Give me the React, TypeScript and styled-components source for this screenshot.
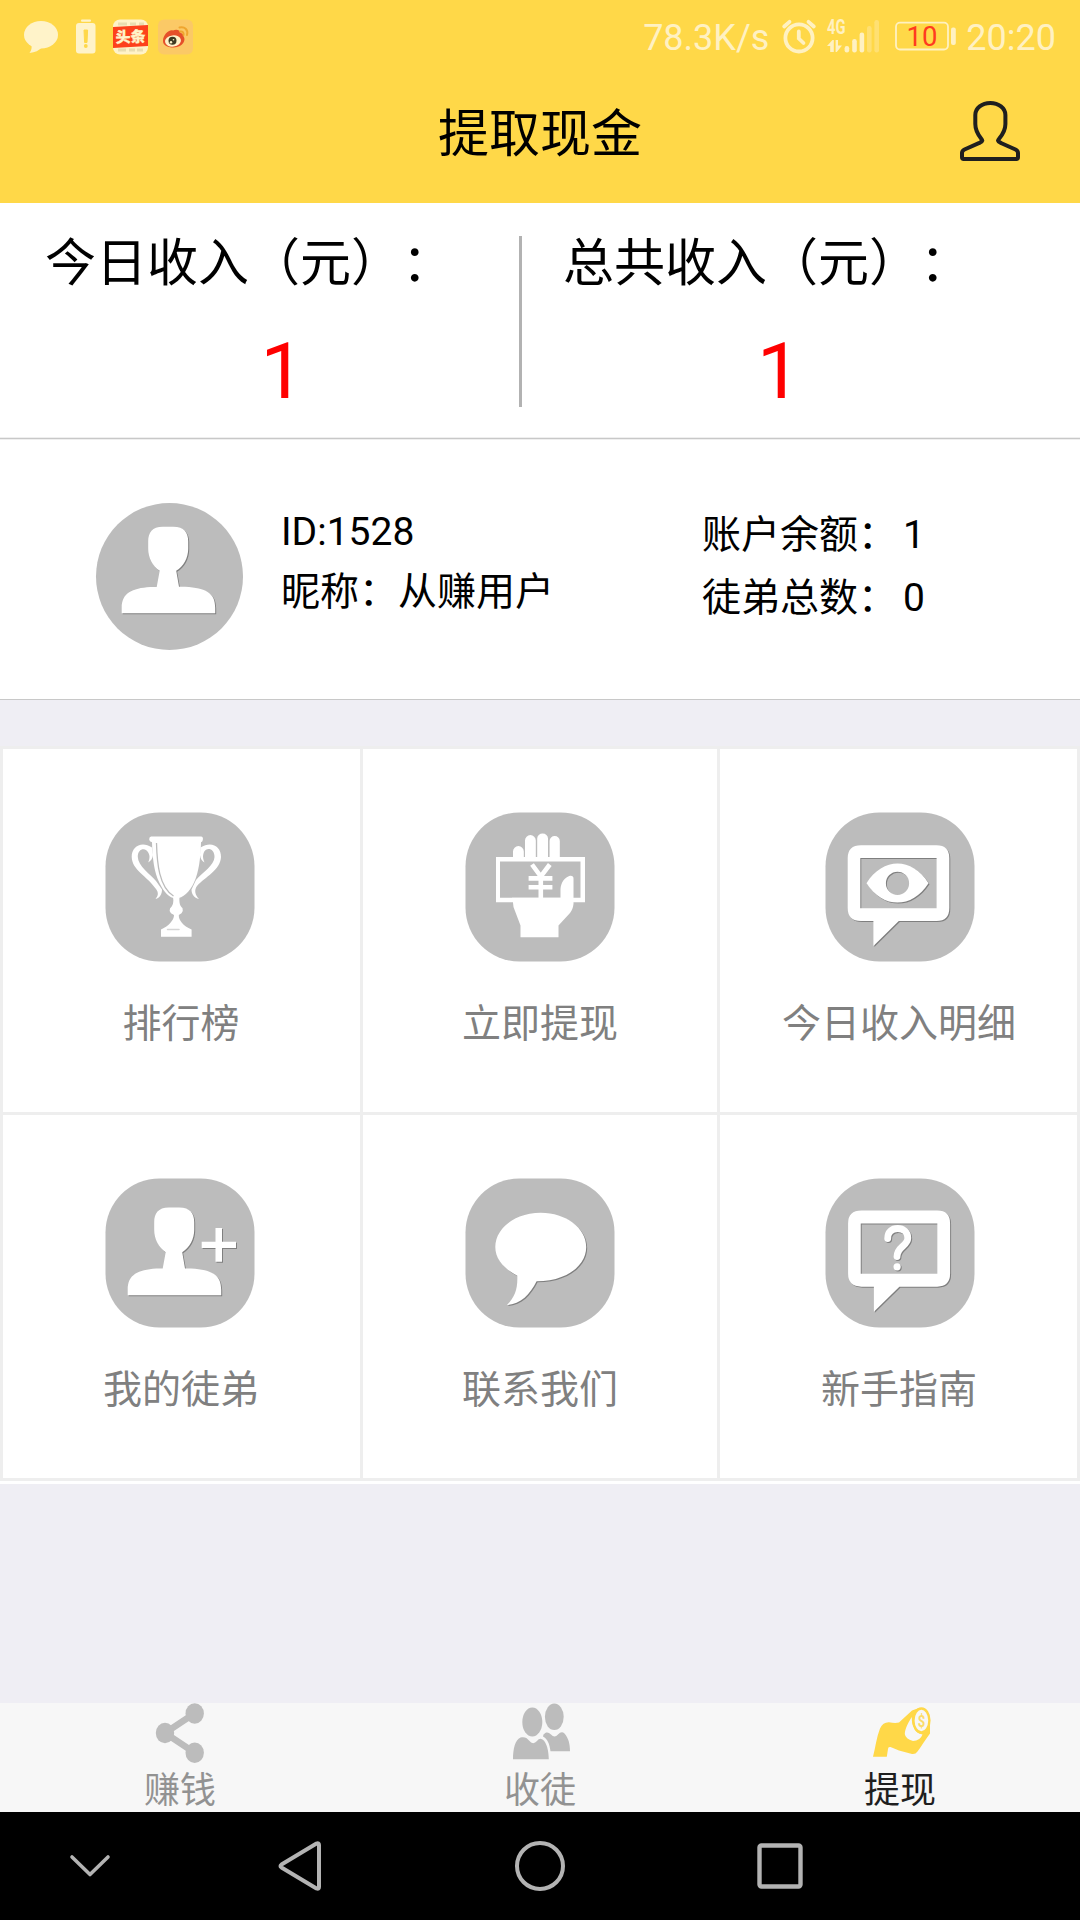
import React from "react";
import styled, { createGlobalStyle } from "styled-components";

const GlobalStyle = createGlobalStyle`
  * { box-sizing: border-box; }
  body {
    margin: 0;
    background: #efeef4;
    font-family: Roboto, "Noto Sans CJK SC", sans-serif;
    text-spacing-trim: space-all;
  }
  svg { display: block; flex: none; overflow: visible; }
`;

const Screen = styled.div`
  width: 1080px;
  height: 1920px;
  display: flex;
  flex-direction: column;
  overflow: hidden;
  background: #efeef4;
  color: #000;
`;

/* Status bar and title */
const Top = styled.header`
  height: 203px;
  background: #ffd848;
`;

const StatusBar = styled.div`
  height: 74px;
  padding: 0 24px;
  display: flex;
  justify-content: space-between;
  color: #fff1c2;
  font-size: 36px;
  line-height: 72px;
`;

const StatusGroup = styled.div`
  display: flex;
  align-items: center;
  height: 74px;
`;

const StatusText = styled.span`
  padding-top: 2px;
`;

const TitleBar = styled.div`
  height: 129px;
  display: grid;
  grid-template-columns: 1fr auto 1fr;
`;

const Title = styled.h1`
  grid-column: 2;
  margin: 0;
  font-size: 51px;
  font-weight: 400;
  line-height: 122px;
`;

const UserButton = styled.div`
  justify-self: end;
  padding: 25px 58px 0 0;
`;

/* Income summary */
const Summary = styled.section`
  height: 234px;
  display: flex;
  background: #fff;
`;

const Income = styled.div<{ $width: number; $indent: number; $shift: number }>`
  width: ${(p) => p.$width}px;
  padding: 31px 0 0 ${(p) => p.$shift}px;

  p {
    margin: 0;
    padding-left: ${(p) => p.$indent}px;
    font-size: 51px;
    line-height: 60px;
    white-space: nowrap;
  }

  strong {
    display: block;
    margin-top: 32px;
    color: #ff0000;
    font-size: 78px;
    font-weight: 400;
    line-height: 92px;
    text-align: center;
    text-indent: 1px;
  }
`;

const Divider = styled.div`
  width: 3px;
  height: 171px;
  margin-top: 33px;
  background: #b2b2b2;
`;

const Hairline = styled.div`
  height: 3px;
  background: #c8c8c8;
  border: solid #efefef;
  border-width: 1px 0;
`;

/* Profile */
const Profile = styled.section`
  height: 260px;
  display: flex;
  background: #fff;
  border-bottom: 1px solid #c8c8c8;
  font-size: 39px;
`;

const Avatar = styled.div`
  padding: 63px 0 0 96px;
`;

const Lines = styled.div<{ $width: number; $top: number; $pitch: number }>`
  width: ${(p) => p.$width}px;
  padding-top: ${(p) => p.$top}px;
  line-height: ${(p) => p.$pitch}px;
  white-space: nowrap;
`;

const Identity = styled(Lines)`
  margin-left: 38px;
`;

const Count = styled.span`
  margin-left: 6px;
`;

/* Menu */
const Menu = styled.section`
  height: 738px;
  margin-top: 46px;
  display: grid;
  grid-template-columns: repeat(3, 360px);
  grid-template-rows: 366px 366px;
  background: #fff;
  box-shadow: inset 0 3px #eee;
`;

const Cell = styled.div<{ $left: boolean; $right: boolean }>`
  padding-top: 66px;
  display: flex;
  flex-direction: column;
  align-items: center;
  box-shadow: ${(p) =>
    ["inset 0 3px #eee", "0 3px #eee", p.$left && "inset 3px 0 #eee", p.$right && "inset -3px 0 #eee"]
      .filter(Boolean)
      .join(", ")};
`;

/* The label centres between the cell's rules, the icon on the full cell. */
const CellLabel = styled.span<{ $left: boolean; $right: boolean }>`
  margin-top: 32px;
  padding-left: ${(p) => (p.$left ? 2 : 0)}px;
  padding-right: ${(p) => (p.$right ? 2 : 0)}px;
  color: #808080;
  font-size: 39px;
  line-height: 60px;
`;

const Glyph = styled.g`
  filter: drop-shadow(1px 1px 0.6px rgba(0, 0, 0, 0.32));
`;

/* Tabs */
const Tabs = styled.nav`
  height: 109px;
  margin-top: auto;
  display: grid;
  grid-template-columns: repeat(3, 360px);
  background: #f7f7f7;
`;

const Tab = styled.div<{ $active?: boolean }>`
  display: flex;
  flex-direction: column;
  align-items: center;
  color: ${(p) => (p.$active ? "#1f1f1f" : "#929292")};
  font-size: 36px;
  line-height: 40px;

  svg { margin-bottom: 8px; }
`;

const SystemBar = styled.footer`
  height: 108px;
  background: #000;
  display: grid;
  grid-template-columns: 180px 240px 240px 240px;
  align-items: center;
  justify-items: center;
`;

const MessageIcon = () => (
  <svg width="34" height="36" viewBox="0 0 34 36">
    <ellipse cx="17" cy="15.700" rx="17" ry="13.800" fill="#fff3c9" />
    <path d="M7.500 25C8 29 7.500 31.500 5.500 34C11 33.500 15 31.500 18.500 28Z" fill="#fff3c9" />
  </svg>
);

const BatteryAlertIcon = () => (
  <svg width="20" height="36" viewBox="0 0 20 36">
    <rect x="5" y="0.600" width="10" height="2.200" rx="1" fill="#fff3c9" />
    <rect x="0" y="4" width="19.500" height="30.500" rx="3" fill="#fff3c9" />
    <path d="M8 11h3.600l-.6 12.500h-2.400z" fill="#ffd848" stroke="#ffd848" strokeLinejoin="round" />
    <circle cx="9.800" cy="27" r="1.900" fill="#ffd848" />
  </svg>
);

const NewsIcon = () => (
  <svg width="35" height="36" viewBox="0 0 35 36">
    <rect y="0.500" width="35" height="35" rx="7" fill="#fff3c9" />
    <path d="M5 5h9M17 5h6M26 5h5M5 31h8M16 31h6M24 31h6" stroke="#e9ddb0" strokeWidth="3" />
    <path d="M0 8L35 6V27L0 29Z" fill="#fd411c" />
    <text x="17.500" y="23.200" transform="rotate(-2 17 18)" textAnchor="middle" fontSize="15" fontWeight="900" fill="#fff3c9" stroke="#fff3c9" strokeWidth="0.300" fontFamily="'Noto Sans CJK SC', sans-serif">头条</text>
  </svg>
);

const WeiboIcon = () => (
  <svg width="35" height="36" viewBox="0 0 35 36">
    <rect y="0.500" width="35" height="35" rx="6" fill="#fbc966" />
    <path d="M5 22C5 16 11 10 15 11.500C17 10.500 22 10 22.500 14C25 14.500 26 16 25.500 17.500C28 20 26 28 15.500 28.500C9 28.500 5 26 5 22Z" fill="#e5502a" />
    <ellipse cx="15" cy="22" rx="8" ry="5.600" fill="#fff3c9" transform="rotate(-8 15 22)" />
    <circle cx="14.500" cy="21.800" r="4" fill="#3d3a22" />
    <circle cx="13" cy="23.300" r="1.200" fill="#fff3c9" />
    <circle cx="15.500" cy="20.800" r="0.800" fill="#fff3c9" />
    <path d="M22 12.500C24.500 12 26 13.500 25.500 16M21.500 8.500C26.500 7 30.500 11 29 16" fill="none" stroke="#efa52f" strokeWidth="2" strokeLinecap="round" />
  </svg>
);

const AlarmIcon = () => (
  <svg width="34" height="36" viewBox="0 0 34 36" fill="none" stroke="#fff1c2" strokeLinecap="round">
    <circle cx="17" cy="18.900" r="13.600" strokeWidth="3.800" />
    <path d="M16.800 12.500V19.500L21.500 24" strokeWidth="3.800" />
    <path d="M2.200 7.500L7.500 2.800M31.800 7.500L26.500 2.800" strokeWidth="3.800" />
  </svg>
);

const SignalIcon = () => (
  <svg width="54" height="36" viewBox="0 0 54 36" fill="#fff1c2">
    <text x="0" y="14.800" fontSize="19.500" fontWeight="700" textLength="18.500" lengthAdjust="spacingAndGlyphs" fontFamily="Roboto, sans-serif">4G</text>
    <path d="M0 27L5.500 21H6.800V33H3.200V27ZM8.600 21H11V26.500H15L9.800 33H8.600Z" />
    <rect x="17.600" y="27" width="4.600" height="6.500" rx="2.200" />
    <rect x="25.200" y="20" width="4.600" height="13.500" rx="2.200" />
    <rect x="32.600" y="13.500" width="4.600" height="20" rx="2.200" />
    <rect x="40" y="7" width="4.600" height="26.500" rx="2.200" opacity="0.350" />
    <rect x="47.400" y="1" width="4.600" height="32.500" rx="2.200" opacity="0.350" />
  </svg>
);

const BatteryIcon = () => (
  <svg width="62" height="36" viewBox="0 0 62 36">
    <rect x="1" y="3.700" width="52" height="26.800" rx="4" fill="none" stroke="#fff1c2" strokeWidth="1.800" />
    <rect x="56" y="8.500" width="4.800" height="17.500" rx="2" fill="#fff1c2" />
    <text x="27" y="27" textAnchor="middle" fontSize="27.500" fill="#ff3b1f" fontFamily="Roboto, sans-serif">10</text>
  </svg>
);

const UserOutlineIcon = () => (
  <svg width="64" height="64" viewBox="0 0 64 64" fill="none" stroke="#1f1f1f" strokeWidth="4" strokeLinejoin="round">
    <path d="M24.300 41.500C24.500 40 17.300 35 17.300 25V16C17.300 9 24 4 32.300 4S47.400 9 47.400 16V25C47.400 35 39.800 40 40 41.500C40.300 43 42 43.500 43.500 44.200L57.500 50.500Q60 51.700 60 54V58.300Q60 60 58.300 60H5.700Q4 60 4 58.300V54Q4 51.700 6.500 50.500L20.800 44.200C22.300 43.500 24 43 24.300 41.500Z" />
  </svg>
);

const bustPath =
  "M14.500 0H25C36 0 40 6 40 14.500V22C40 31 35.500 39.500 28 44L30.800 60H37C58 61.500 67 66 67 81V86.500H-26.500V81C-26.500 66 -16 61.500 2 60.200H8.500L11.500 44C4.500 39.500 0 31 0 22V14.500C0 6 4 0 14.500 0Z";

const AvatarIcon = () => (
  <svg width="147" height="147" viewBox="0 0 147 147">
    <circle cx="73.500" cy="73.500" r="73.500" fill="#bcbcbc" />
    <Glyph transform="translate(52.200 23.700)" fill="#fff">
      <path d={bustPath} />
    </Glyph>
  </svg>
);

const Tile = ({ children }: { children: React.ReactNode }) => (
  <svg width="150" height="150" viewBox="0 0 150 150">
    <rect x="0.500" y="0.500" width="149" height="149" rx="54" fill="#bcbcbc" />
    {children}
  </svg>
);

const TrophyIcon = () => (
  <Tile>
    <path fill="#fff" d="M46 24.600H96Q98.500 25 97.800 28Q97.500 29.800 96 30.200C95.500 46 94 60 89 70.500C84.500 80 78 86.300 71 86.300S59 80 54.500 71C49 60 47.500 46 47 30.200Q44.300 29.800 44.200 27.500Q44 25 46 24.600Z" />
    <path fill="none" stroke="#bcbcbc" strokeWidth="1.300" d="M51.500 31C52 51 54 75 68.500 84" />
    <path fill="#fff" d="M47 35.500C37 28.500 26.500 34 26.700 45C27 58 42 64 51 77C54 81 53 84 50.500 87C55 86 57 82 57 77.500L51 69C45 62 33 54 32.800 45C32.600 36 41 35 43.500 41C45.500 45 44 48 43.300 50.500C46 48.500 47.500 47 48 43ZM95.500 35.500C106 28.500 116.300 34 116 45C115.500 58 100 65 92 74C89 78 90 83 94 87C89 86 86.500 82 86.500 77.500L91 68C97 61 109.500 53 109.500 45C109.500 36 101.500 35 99 40C97 44.500 98.500 48 99.500 50.500C97 49 95.500 47 95 43Z" />
    <path fill="#fff" d="M68 85H74.500C74 91 75 94 77.500 96Q78.500 99 76.500 101.200L73.800 103C73.500 108 78 114 86.600 117.500V124.700H56V117.500C64 114 69 108 69 103L66 101.200Q63.800 99 65 96.500C68 94 69 90 68 85Z" />
    <path stroke="#d5d5d5" strokeWidth="1.500" strokeLinecap="round" d="M62.500 117.500H74" />
  </Tile>
);

const CashHandIcon = () => (
  <Tile>
    <g fill="#fff">
      <path fillRule="evenodd" d="M31 45H120V90.300H31ZM35 49.500V85.700H115.500V49.500Z" />
      <path d="M48 47V39.500A5.400 5.400 0 0 1 58.800 39.500V47ZM60 47V28.500A5.400 5.400 0 0 1 70.800 28.500V47ZM72.200 47V26.500A5.400 5 0 0 1 83 26.500V47ZM84.600 47V29A5.100 5 0 0 1 94.800 29V47Z" />
      <path d="M47 85.700H95.500V77C96 70 100 65 105 63.700Q108.500 63.300 108.500 66.500V92C108 96 107 98 105 101L93.500 113.500V125.200H55.500V113.500L50 99Q48 95 47.800 89Z" />
    </g>
    <path fill="none" stroke="#fff" strokeWidth="4.600" d="M67 52.500L75.800 64.500L84.800 52.500M75.800 64V86M63.600 66.400H87.400M63.600 75.200H87.400" />
  </Tile>
);

const bubbleFrame =
  "M36 33.200H111.500Q124.300 33.200 124.300 46V96Q124.300 109 111.500 109H73.800L48.400 134V109H36Q22.700 109 22.700 96V46Q22.700 33.200 36 33.200ZM35.300 46V96.200H111.600V46Z";

const EyeBubbleIcon = () => (
  <Tile>
    <Glyph fill="#fff" fillRule="evenodd">
      <path d={bubbleFrame} />
      <path d="M41.500 71.200C58 45 87 45 103.500 71.200C87 97 58 97 41.500 71.200ZM60.900 71.300A11.600 11.600 0 1 0 84.100 71.300A11.600 11.600 0 1 0 60.900 71.300Z" />
    </Glyph>
  </Tile>
);

const HelpBubbleIcon = () => (
  <Tile>
    <Glyph fill="#fff" fillRule="evenodd">
      <path transform="translate(0.300 -0.800) scale(1.004)" d={bubbleFrame} />
      <path d="M62.700 60.500C62.700 54 67 50.500 72.700 50.500S82.800 54 82.800 60C82.800 68 72 68.500 72 78.500" fill="none" stroke="#fff" strokeWidth="6.800" strokeLinecap="round" />
      <circle cx="72.100" cy="88.800" r="3.600" />
    </Glyph>
  </Tile>
);

const AddUserIcon = () => (
  <Tile>
    <Glyph fill="#fff">
      <path transform="translate(49.200 29.500) scale(1 1.015)" d={bustPath} />
      <path d="M110.500 50H117V63.700H131V70H117V83.700H110.500V70H96.700V63.700H110.500Z" />
    </Glyph>
  </Tile>
);

const ChatIcon = () => (
  <Tile>
    <Glyph fill="#fff">
      <path d="M75.800 34.700C101 34.700 121.200 50 121.200 69S101 103.300 71.600 103.300C65 116 56 126.500 42 127C50 119 52.800 111 52.300 97.700C39 91 30.300 81 30.300 69C30.300 50 50.500 34.700 75.800 34.700Z" />
    </Glyph>
  </Tile>
);

const ShareIcon = () => (
  <svg width="60" height="60" viewBox="0 0 60 60" fill="#bcbcbc">
    <path d="M15 30L44.700 10.300M15 30L44.700 49.700" stroke="#bcbcbc" strokeWidth="6.500" />
    <ellipse cx="44.700" cy="10.500" rx="9.200" ry="10.200" />
    <ellipse cx="15" cy="30" rx="9.200" ry="10.200" />
    <ellipse cx="44.700" cy="49.700" rx="9.200" ry="10.200" />
  </svg>
);

const PeopleIcon = () => (
  <svg width="60" height="60" viewBox="0 0 60 60" fill="#bcbcbc">
    <ellipse cx="22.300" cy="19" rx="10" ry="14.500" />
    <ellipse cx="44.300" cy="13.800" rx="9.400" ry="13.200" />
    <path d="M3 56.300C3 46 5 37 10.500 34.500C14 33.500 17 34.500 19 37.500Q23 42.500 27 38C29 35.500 30.500 35 32.500 36.500C37 39.500 38.700 48 38.800 56.300Z" />
    <path d="M33.500 31.500C36 28.500 38.500 29 41 31.500Q44.500 35.500 48 31.500Q51.500 27.500 54.500 30.500C58.500 35 60 41 60 48.300H40.500C39.500 40.500 37.500 36 33 33.500Z" />
  </svg>
);

const PayoutIcon = () => (
  <svg width="60" height="60" viewBox="0 0 60 60">
    <path fill="#ffd848" d="M3 53.700C5.500 44 6.500 34 10 25.500Q13 19 19 19.200Q25 20.500 29 19.500L42 7.500L49 5L60 17V30.500C55 37 51 44 47.500 48.500Q45.500 51.500 42 51L29 47.500L20.500 44Q18 43.500 18 46L16.800 53.700Z" />
    <path fill="#f7f7f7" d="M41.800 14C41.500 23 45 30 52.500 31.500Q50 38 43 38Q35.500 36 34.800 31C35 25 39 18.500 41.800 14Z" />
    <ellipse cx="51.400" cy="17.500" rx="8" ry="12" fill="#f7f7f7" stroke="#ffd848" strokeWidth="2.400" />
    <text x="51.400" y="23.500" textAnchor="middle" fontSize="16" fontWeight="700" textLength="7.500" lengthAdjust="spacingAndGlyphs" fill="#fbdc6b" fontFamily="Roboto, sans-serif">$</text>
  </svg>
);

const menu = [
  { label: "排行榜", Icon: TrophyIcon },
  { label: "立即提现", Icon: CashHandIcon },
  { label: "今日收入明细", Icon: EyeBubbleIcon },
  { label: "我的徒弟", Icon: AddUserIcon },
  { label: "联系我们", Icon: ChatIcon },
  { label: "新手指南", Icon: HelpBubbleIcon },
];

const tabs = [
  { label: "赚钱", Icon: ShareIcon },
  { label: "收徒", Icon: PeopleIcon },
  { label: "提现", Icon: PayoutIcon, active: true },
];

const Notifications = styled(StatusGroup)`
  > :nth-child(2) { margin-left: 18px; }
  > :nth-child(3) { margin-left: 17px; }
  > :nth-child(4) { margin-left: 10px; }
`;

const Indicators = styled(StatusGroup)`
  > :nth-child(2) { margin-left: 13px; }
  > :nth-child(3) { margin-left: 11px; }
  > :nth-child(4) { margin: 0 9px 0 14px; }
`;

export default function App() {
  return (
    <>
      <GlobalStyle />
      <Screen>
        <Top>
          <StatusBar>
            <Notifications>
              <MessageIcon />
              <BatteryAlertIcon />
              <NewsIcon />
              <WeiboIcon />
            </Notifications>
            <Indicators>
              <StatusText>78.3K/s</StatusText>
              <AlarmIcon />
              <SignalIcon />
              <BatteryIcon />
              <StatusText>20:20</StatusText>
            </Indicators>
          </StatusBar>
          <TitleBar>
            <Title>提取现金</Title>
            <UserButton>
              <UserOutlineIcon />
            </UserButton>
          </TitleBar>
        </Top>

        <Summary>
          <Income $width={519} $shift={45} $indent={0}>
            <p>今日收入（元）：</p>
            <strong>1</strong>
          </Income>
          <Divider />
          <Income $width={513} $shift={0} $indent={41}>
            <p>总共收入（元）：</p>
            <strong>1</strong>
          </Income>
        </Summary>
        <Hairline />

        <Profile>
          <Avatar>
            <AvatarIcon />
          </Avatar>
          <Identity $width={421} $top={62} $pitch={60}>
            <div>ID:1528</div>
            <div>昵称：从赚用户</div>
          </Identity>
          <Lines $width={300} $top={64} $pitch={63}>
            <div>账户余额：<Count>1</Count></div>
            <div>徒弟总数：<Count>0</Count></div>
          </Lines>
        </Profile>

        <Menu>
          {menu.map(({ label, Icon }, i) => (
            <Cell key={label} $left={i % 3 !== 2} $right={i % 3 !== 0}>
              <Icon />
              <CellLabel $left={i % 3 === 0} $right={i % 3 === 2}>{label}</CellLabel>
            </Cell>
          ))}
        </Menu>

        <Tabs>
          {tabs.map(({ label, Icon, active }) => (
            <Tab key={label} $active={active}>
              <Icon />
              <span>{label}</span>
            </Tab>
          ))}
        </Tabs>

        <SystemBar>
          <svg width="44" height="30" viewBox="0 0 44 30" fill="none" stroke="#b3b3b3" strokeWidth="3.600" strokeLinecap="round" strokeLinejoin="round">
            <path d="M4 6L22 23.500L40 6" />
          </svg>
          <svg width="50" height="54" viewBox="0 0 50 54" fill="none" stroke="#b3b3b3" strokeWidth="4" strokeLinejoin="round">
            <path d="M6.500 25.500Q4.500 27 6.500 28.500L41.500 49.500Q44 50.500 44 48V6Q44 3.500 41.500 4.500Z" />
          </svg>
          <svg width="54" height="54" viewBox="0 0 54 54" fill="none" stroke="#b3b3b3" strokeWidth="4">
            <circle cx="27" cy="27" r="23" />
          </svg>
          <svg width="54" height="54" viewBox="0 0 54 54" fill="none" stroke="#b3b3b3" strokeWidth="4.400">
            <rect x="6.500" y="6.500" width="41" height="41" rx="2" />
          </svg>
        </SystemBar>
      </Screen>
    </>
  );
}
